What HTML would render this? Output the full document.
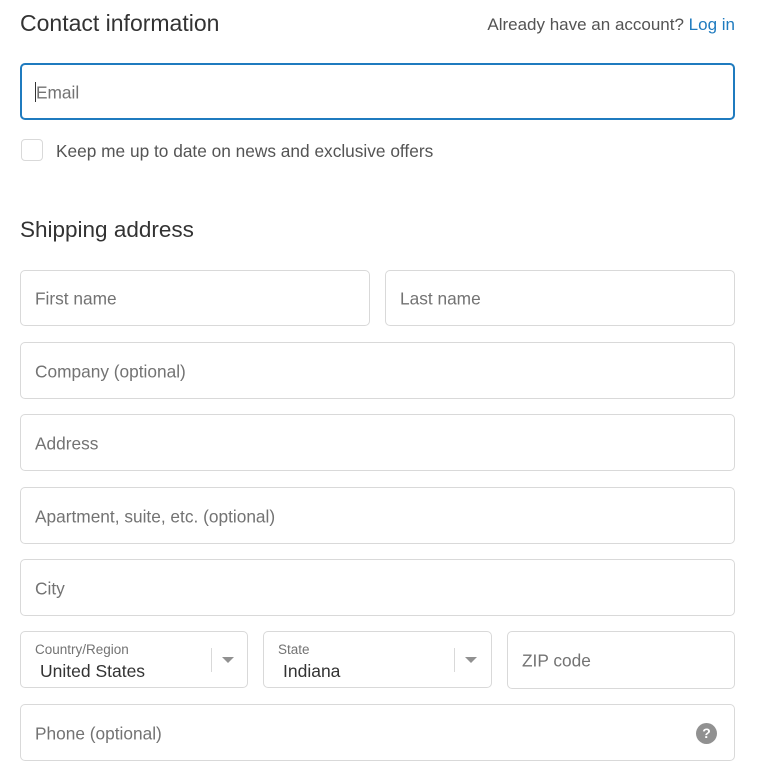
<!DOCTYPE html>
<html><head><style>
*{box-sizing:border-box;margin:0;padding:0}
body{width:758px;height:776px;background:#fff;font-family:"Liberation Sans",sans-serif;color:#333;position:relative;overflow:hidden}
.a{position:absolute}
.f{position:absolute;border:1px solid #d9d9d9;border-radius:5px;background:#fff}
.ph{position:absolute;left:14px;top:50%;transform:translateY(-46%);font-size:17.3px;color:#737373;white-space:nowrap}
.lbl{position:absolute;left:14px;top:10px;font-size:13.5px;color:#737373}
.val{position:absolute;left:19px;top:29px;font-size:17.5px;color:#333}
.sep{position:absolute;top:16px;width:1px;height:24px;background:#d9d9d9}
.tri{position:absolute;top:25px;width:0;height:0;border-left:6px solid transparent;border-right:6px solid transparent;border-top:6px solid #919191}
</style></head><body>
<div class="a" style="left:20px;top:10px;font-size:23px;color:#333">Contact information</div>
<div class="a" style="right:23px;top:15px;font-size:17px;color:#545454">Already have an account? <span style="color:#1f7bbf">Log in</span></div>
<div class="f" style="left:20px;top:63px;width:715px;height:57px;border:2px solid #1f7bbf">
<div class="a" style="left:13px;top:17px;width:1px;height:20px;background:#333"></div>
<div class="ph" style="left:14px">Email</div></div>
<div class="f" style="left:21px;top:139px;width:22px;height:22px;border-radius:4px"></div>
<div class="a" style="left:56px;top:141px;font-size:17.3px;color:#545454">Keep me up to date on news and exclusive offers</div>
<div class="a" style="left:20px;top:217px;font-size:22.5px;color:#333">Shipping address</div>
<div class="f" style="left:20px;top:270px;width:350px;height:56px"><div class="ph">First name</div></div>
<div class="f" style="left:385px;top:270px;width:350px;height:56px"><div class="ph">Last name</div></div>
<div class="f" style="left:20px;top:342px;width:715px;height:57px"><div class="ph">Company (optional)</div></div>
<div class="f" style="left:20px;top:414px;width:715px;height:57px"><div class="ph">Address</div></div>
<div class="f" style="left:20px;top:487px;width:715px;height:57px"><div class="ph">Apartment, suite, etc. (optional)</div></div>
<div class="f" style="left:20px;top:559px;width:715px;height:57px"><div class="ph">City</div></div>
<div class="f" style="left:20px;top:631px;width:228px;height:57px"><div class="lbl">Country/Region</div><div class="val">United States</div><div class="sep" style="left:190px"></div><div class="tri" style="left:201px"></div></div>
<div class="f" style="left:263px;top:631px;width:229px;height:57px"><div class="lbl">State</div><div class="val">Indiana</div><div class="sep" style="left:190px"></div><div class="tri" style="left:201px"></div></div>
<div class="f" style="left:507px;top:631px;width:228px;height:58px"><div class="ph">ZIP code</div></div>
<div class="f" style="left:20px;top:704px;width:715px;height:57px"><div class="ph">Phone (optional)</div>
<div class="a" style="left:675px;top:18px;width:21px;height:21px;border-radius:50%;background:#919191;color:#fff;font-weight:bold;font-size:14px;text-align:center;line-height:21px">?</div></div>
</body></html>
